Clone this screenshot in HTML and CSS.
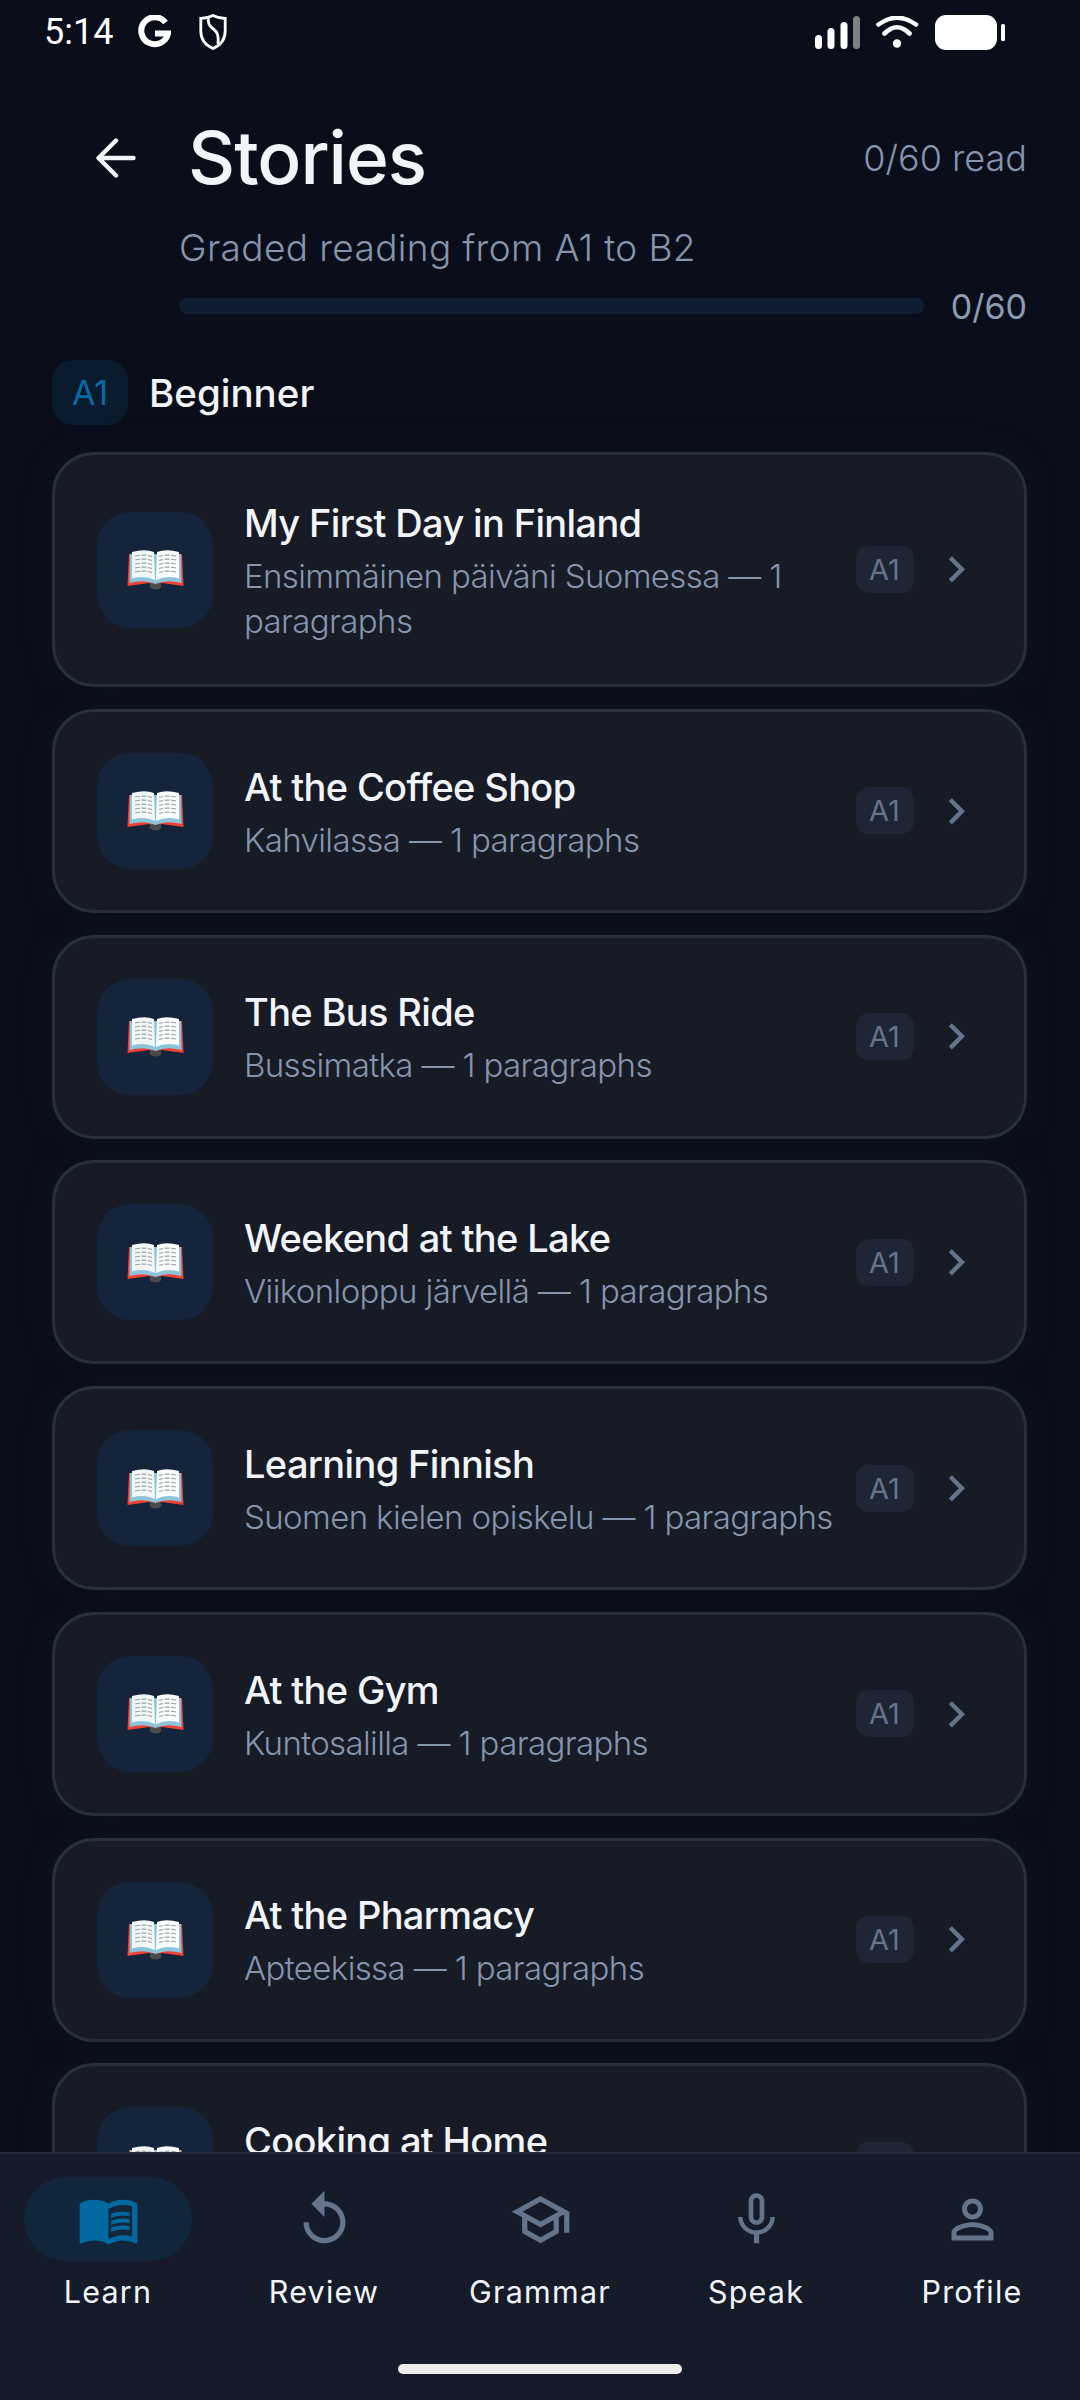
FILE: index.html
```html
<!DOCTYPE html>
<html lang="en">
<head>
<meta charset="utf-8">
<title>Stories</title>
<link rel="stylesheet" href="styles.css">
</head>
<body>
<svg class="defs" width="0" height="0" aria-hidden="true">
  <symbol id="book" viewBox="0 0 57 41">
    <path d="M2 5 L.5 37 L22 34 Q28.5 37 35 34 L56.5 37 L55 5Z" fill="#ef4136"/>
    <ellipse cx="28.5" cy="37" rx="6" ry="3.5" fill="#4a4a4a"/>
    <path d="M3 5 L2.5 34 Q18 30 28.5 35 Q39 30 54.5 34 L54 5Z" fill="#8cc5da"/>
    <path d="M5 3 Q18 -.5 27 3 L28 31 Q18 26 5 29.5Z" fill="#f3f6f7"/>
    <path d="M52 3 Q39 -.5 30 3 L29 31 Q39 26 52 29.5Z" fill="#fbfcfc"/>
    <g class="book-lines">
      <path d="M8 7 Q17 5 25 7.500M8 11 Q17 9 25 11.500M8 15 Q17 13 25 15.500M8 19 Q17 17 25 19.500M8 23 Q17 21 25 23.500"/>
      <path d="M49 7 Q40 5 32 7.500M49 11 Q40 9 32 11.500M49 15 Q40 13 32 15.500M49 19 Q40 17 32 19.500M49 23 Q40 21 32 23.500"/>
    </g>
  </symbol>
  <symbol id="chev" viewBox="0 0 24 24"><path d="M10 6L8.590 7.410 13.170 12l-4.580 4.590L10 18l6-6z"/></symbol>
</svg>
<div class="screen">
  <div class="status">
    <span class="time">5:14</span>
    <svg class="st-g" viewBox="0 0 33 34"><path d="M27.500 7.500A13.500 13.500 0 1 0 30 18.500H17" fill="none" stroke="#fff" stroke-width="6"/></svg>
    <svg class="st-shield" viewBox="0 0 28 36"><path d="M14 1.500C10 3.500 5.500 4.500 1.800 4.500V17C1.800 26 7 31.500 14 34.500 21 31.500 26.200 26 26.200 17V4.500C22.500 4.500 18 3.500 14 1.500Z" fill="none" stroke="#fff" stroke-width="2.800"/><path d="M9.500 4C8 10 11.500 13 15 15.500 18.500 18 20 22 19 30" fill="none" stroke="#fff" stroke-width="2.800"/></svg>
    <div class="st-right">
      <svg class="st-signal" viewBox="0 0 45 33">
        <rect class="bar-on" x="0" y="19" width="7" height="14" rx="3.500"/>
        <rect class="bar-on" x="12.500" y="12" width="7" height="21" rx="3.500"/>
        <rect class="bar-on" x="25.500" y="6" width="7" height="27" rx="3.500"/>
        <rect class="bar-off" x="38" y="0" width="7" height="33" rx="3.500"/>
      </svg>
      <svg class="st-wifi" viewBox="0 0 43 32"><path d="M2.500 8.500Q21 -5 40 8.500M8.500 17.500Q21 5 33.500 17.500" fill="none" stroke="#fff" stroke-width="4.600" stroke-linecap="round"/><circle cx="21" cy="27.500" r="4.200" fill="#fff"/></svg>
      <svg class="st-batt" viewBox="0 0 70 35"><rect width="62" height="35" rx="11" fill="#fff"/><rect x="66" y="9" width="4" height="17" rx="1.500" fill="#fff"/></svg>
    </div>
  </div>

  <main class="main">
    <header class="head-row">
      <svg class="back" viewBox="0 0 40 40"><path d="M37.500 20H3M20 2.500L2.500 20 20 37.500" fill="none" stroke="#f1f5f9" stroke-width="4.400" stroke-linecap="round" stroke-linejoin="round"/></svg>
      <h1 class="title">Stories</h1>
      <span class="read-count">0/60 read</span>
    </header>
    <p class="subtitle">Graded reading from A1 to B2</p>
    <div class="progress-row">
      <div class="progress-track"></div>
      <span class="progress-text">0/60</span>
    </div>
    <div class="section-head">
      <span class="section-badge">A1</span>
      <h2 class="section-title">Beginner</h2>
    </div>
    <div class="cards">
      <article class="card">
        <div class="thumb"><svg class="book"><use href="#book"/></svg></div>
        <div class="card-text"><h3 class="card-title">My First Day in Finland</h3><p class="card-sub">Ensimmäinen päiväni Suomessa — 1 paragraphs</p></div>
        <span class="level">A1</span><svg class="chev"><use href="#chev"/></svg>
      </article>
      <article class="card">
        <div class="thumb"><svg class="book"><use href="#book"/></svg></div>
        <div class="card-text"><h3 class="card-title">At the Coffee Shop</h3><p class="card-sub">Kahvilassa — 1 paragraphs</p></div>
        <span class="level">A1</span><svg class="chev"><use href="#chev"/></svg>
      </article>
      <article class="card">
        <div class="thumb"><svg class="book"><use href="#book"/></svg></div>
        <div class="card-text"><h3 class="card-title">The Bus Ride</h3><p class="card-sub">Bussimatka — 1 paragraphs</p></div>
        <span class="level">A1</span><svg class="chev"><use href="#chev"/></svg>
      </article>
      <article class="card">
        <div class="thumb"><svg class="book"><use href="#book"/></svg></div>
        <div class="card-text"><h3 class="card-title">Weekend at the Lake</h3><p class="card-sub">Viikonloppu järvellä — 1 paragraphs</p></div>
        <span class="level">A1</span><svg class="chev"><use href="#chev"/></svg>
      </article>
      <article class="card">
        <div class="thumb"><svg class="book"><use href="#book"/></svg></div>
        <div class="card-text"><h3 class="card-title">Learning Finnish</h3><p class="card-sub">Suomen kielen opiskelu — 1 paragraphs</p></div>
        <span class="level">A1</span><svg class="chev"><use href="#chev"/></svg>
      </article>
      <article class="card">
        <div class="thumb"><svg class="book"><use href="#book"/></svg></div>
        <div class="card-text"><h3 class="card-title">At the Gym</h3><p class="card-sub">Kuntosalilla — 1 paragraphs</p></div>
        <span class="level">A1</span><svg class="chev"><use href="#chev"/></svg>
      </article>
      <article class="card">
        <div class="thumb"><svg class="book"><use href="#book"/></svg></div>
        <div class="card-text"><h3 class="card-title">At the Pharmacy</h3><p class="card-sub">Apteekissa — 1 paragraphs</p></div>
        <span class="level">A1</span><svg class="chev"><use href="#chev"/></svg>
      </article>
      <article class="card">
        <div class="thumb"><svg class="book"><use href="#book"/></svg></div>
        <div class="card-text"><h3 class="card-title">Cooking at Home</h3><p class="card-sub">&nbsp;</p></div>
        <span class="level">A1</span><svg class="chev"><use href="#chev"/></svg>
      </article>
    </div>
  </main>

  <nav class="nav">
    <div class="tabs">
      <div class="tab">
        <div class="pill pill-active"><svg class="tab-icon icon-active" viewBox="0 0 24 24"><path d="M21 5c-1.110-.35-2.330-.5-3.500-.5-1.950 0-4.050.4-5.500 1.500-1.450-1.100-3.550-1.500-5.500-1.500S2.450 4.900 1 6v14.650c0 .25.25.5.5.5.1 0 .15-.05.25-.05C3.100 20.450 5.050 20 6.500 20c1.950 0 4.050.4 5.500 1.500 1.350-.85 3.800-1.500 5.500-1.500 1.650 0 3.350.3 4.750 1.050.1.05.15.05.25.05.25 0 .5-.25.5-.5V6c-.6-.45-1.250-.75-2-1zm0 13.500c-1.100-.35-2.300-.5-3.500-.5-1.700 0-4.150.65-5.500 1.500V8c1.350-.85 3.800-1.500 5.500-1.500 1.200 0 2.400.15 3.500.5v11.500z"/><path d="M17.500 10.500c.88 0 1.730.09 2.500.26V9.240c-.79-.15-1.640-.24-2.500-.24-1.700 0-3.240.29-4.500.83v1.660c1.130-.64 2.700-.99 4.500-.99zM13 12.490v1.660c1.130-.64 2.700-.99 4.500-.99.88 0 1.730.09 2.500.26V11.900c-.79-.15-1.640-.24-2.500-.24-1.700 0-3.240.3-4.500.83zM17.500 14.330c-1.700 0-3.240.29-4.500.83v1.660c1.130-.64 2.700-.99 4.500-.99.88 0 1.730.09 2.500.26v-1.520c-.79-.16-1.640-.24-2.500-.24z"/></svg></div>
        <span class="tab-label">Learn</span>
      </div>
      <div class="tab">
        <div class="pill"><svg class="tab-icon" viewBox="0 0 24 24"><path d="M12 5V1L7 6l5 5V7c3.310 0 6 2.690 6 6s-2.690 6-6 6-6-2.690-6-6H4c0 4.420 3.580 8 8 8s8-3.580 8-8-3.580-8-8-8z"/></svg></div>
        <span class="tab-label">Review</span>
      </div>
      <div class="tab">
        <div class="pill"><svg class="tab-icon" viewBox="0 0 24 24"><path d="M12 3L1 9l4 2.180v6L12 21l7-3.820v-6l2-1.090V17h2V9L12 3zm6.820 6L12 12.720 5.180 9 12 5.280 18.820 9zM17 15.990l-5 2.730-5-2.730v-3.720L12 15l5-2.730v3.720z"/></svg></div>
        <span class="tab-label">Grammar</span>
      </div>
      <div class="tab">
        <div class="pill"><svg class="tab-icon" viewBox="0 0 24 24"><path d="M12 14c1.660 0 2.990-1.340 2.990-3L15 5c0-1.660-1.340-3-3-3S9 3.340 9 5v6c0 1.660 1.340 3 3 3zm-1.200-9.100c0-.66.54-1.200 1.200-1.200.66 0 1.200.54 1.200 1.200l-.01 6.200c0 .66-.53 1.200-1.190 1.200-.66 0-1.200-.54-1.200-1.200V4.900zm6.500 6.100c0 3-2.540 5.100-5.300 5.100S6.700 14 6.700 11H5c0 3.410 2.720 6.230 6 6.720V21h2v-3.280c3.280-.48 6-3.300 6-6.720h-1.700z"/></svg></div>
        <span class="tab-label">Speak</span>
      </div>
      <div class="tab">
        <div class="pill"><svg class="tab-icon" viewBox="0 0 24 24"><path d="M12 5.900c1.160 0 2.100.94 2.100 2.100s-.94 2.100-2.100 2.100S9.900 9.160 9.900 8s.94-2.100 2.100-2.100m0 9c2.970 0 6.100 1.460 6.100 2.100v1.100H5.900V17c0-.64 3.130-2.100 6.100-2.100M12 4C9.790 4 8 5.790 8 8s1.790 4 4 4 4-1.790 4-4-1.790-4-4-4zm0 9c-2.670 0-8 1.340-8 4v3h16v-3c0-2.660-5.330-4-8-4z"/></svg></div>
        <span class="tab-label">Profile</span>
      </div>
    </div>
    <div class="home-bar"></div>
  </nav>
</div>
</body>
</html>
```

FILE: styles.css
```css
* { box-sizing: border-box; }
html, body { margin: 0; padding: 0; }
body { background: #0a0e1a; font-family: "Inter", "Noto Sans", sans-serif; color: #f1f5f9; }
h1, h2, h3, p { margin: 0; font-weight: inherit; font-size: inherit; }
.defs { position: absolute; }
.screen { width: 1080px; height: 2400px; display: flex; flex-direction: column; overflow: hidden; background: #0a0e1a; }

/* status bar */
.status { flex: none; height: 64px; display: flex; align-items: center; padding: 0 75px 0 44px; }
.time { font-family: "Roboto", sans-serif; font-size: 36px; color: #fff; width: 70px; white-space: nowrap; }
.st-g { width: 33px; height: 34px; margin-left: 24px; }
.st-shield { width: 28px; height: 36px; margin-left: 28px; }
.st-right { margin-left: auto; display: flex; align-items: center; }
.st-signal { width: 45px; height: 33px; }
.bar-on { fill: #fff; }
.bar-off { fill: #808080; }
.st-wifi { width: 43px; height: 32px; margin-left: 16px; }
.st-batt { width: 70px; height: 35px; margin-left: 16px; }

/* header */
.main { flex: 1; min-height: 0; overflow: hidden; }
.head-row { display: flex; align-items: center; height: 80px; margin-top: 54px; padding: 0 53px 0 96px; }
.back { width: 40px; height: 40px; flex: none; }
.title { font-size: 73px; font-weight: 500; margin-left: 52px; letter-spacing: -1px; line-height: 80px; color: #f1f5f9; }
.read-count { margin-left: auto; font-size: 36px; font-weight: 300; color: #8695ae; }
.subtitle { margin: 27px 0 0 179px; font-size: 37px; line-height: 46px; font-weight: 300; letter-spacing: .38px; color: #8695ae; }
.progress-row { display: flex; align-items: center; margin: 23px 53px 0 179px; height: 24px; }
.progress-track { flex: 1; height: 16px; border-radius: 8px; background: #0f1d33; }
.progress-text { margin-left: 27px; font-size: 34px; font-weight: 400; color: #8b9cb5; }
.section-head { display: flex; align-items: center; margin: 42px 0 0 52px; height: 65px; }
.section-badge { width: 76px; height: 65px; border-radius: 21px; background: #0a1b2e; color: #0a6aa8; font-size: 34px; display: flex; align-items: center; justify-content: center; }
.section-title { margin-left: 21px; font-size: 38.500px; font-weight: 500; color: #f1f5f9; }

/* cards */
.cards { margin: 27px 53px 0 52px; display: flex; flex-direction: column; gap: 21.750px; }
.card { flex: none; display: flex; align-items: center; border: 3px solid #2a2f3d; border-radius: 42px; background: #171b26; padding: 41px 42px; box-shadow: 0 0 30px rgba(20, 26, 40, .5); }
.thumb { width: 116px; height: 116px; flex: none; border-radius: 33px; background: #14243a; display: flex; align-items: center; justify-content: center; }
.book { width: 57px; height: 41px; }
.book-lines { fill: none; stroke: #9aa0a5; stroke-width: 1.100; stroke-dasharray: 5 1.500; }
.card-text { flex: 1; min-width: 0; margin: 0 4px 0 31px; }
.card-title { font-size: 38px; line-height: 52px; font-weight: 500; letter-spacing: -.65px; color: #f1f5f9; padding: 1px 0 5px; }
.card-sub { font-size: 33px; line-height: 44.500px; font-weight: 300; letter-spacing: -.62px; color: #8695ae; }
.level { flex: none; width: 58px; height: 47px; border-radius: 13px; background: #1e2636; color: #64748b; font-size: 29px; display: flex; align-items: center; justify-content: center; margin-left: 17px; }
.chev { flex: none; width: 52.500px; height: 52.500px; margin-left: 16px; fill: #64748b; }

/* bottom nav */
.nav { flex: none; height: 248px; border-top: 2px solid #252a38; background: #151b29; display: flex; flex-direction: column; align-items: center; }
.tabs { width: 100%; display: grid; grid-template-columns: repeat(5, 216px); padding-top: 23px; }
.tab { display: flex; flex-direction: column; align-items: center; }
.pill { width: 168px; height: 84px; border-radius: 42px; display: flex; align-items: center; justify-content: center; }
.pill-active { background: #12263b; }
.tab-icon { width: 63px; height: 63px; fill: #64748b; }
.icon-active { fill: #0369a1; }
.tab-label { margin-top: 9px; font-size: 30.500px; line-height: 44px; letter-spacing: 1.200px; font-weight: 400; color: #f1f5f9; }
.home-bar { width: 284px; height: 10px; border-radius: 5px; background: #ececec; margin-top: 50px; }
```
